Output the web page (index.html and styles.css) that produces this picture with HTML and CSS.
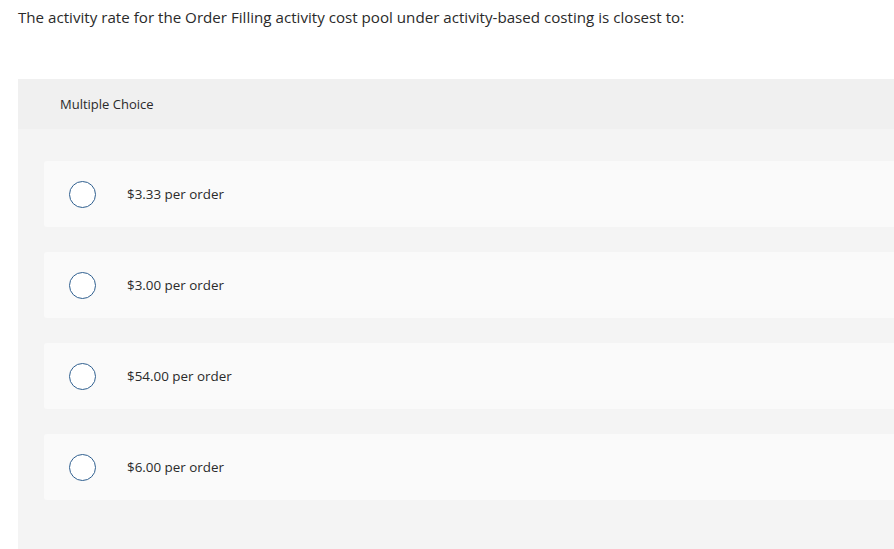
FILE: index.html
```html
<!DOCTYPE html>
<html>
<head>
<meta charset="utf-8">
<link rel="stylesheet" href="styles.css">
</head>
<body>
<div class="page">
  <p class="question">The activity rate for the Order Filling activity cost pool under activity-based costing is closest to:</p>
  <div class="panel">
    <div class="panel-head">Multiple Choice</div>
    <div class="panel-body">
      <label class="option"><span class="radio"></span><span class="label">$3.33 per order</span></label>
      <label class="option"><span class="radio"></span><span class="label">$3.00 per order</span></label>
      <label class="option"><span class="radio"></span><span class="label">$54.00 per order</span></label>
      <label class="option"><span class="radio"></span><span class="label">$6.00 per order</span></label>
    </div>
  </div>
</div>
</body>
</html>
```

FILE: styles.css
```css
html, body {
  margin: 0;
  padding: 0;
  background: #ffffff;
  overflow: hidden;
}
body {
  font-family: "Open Sans", "Liberation Sans", sans-serif;
  color: #2a2a2a;
}
.page {
  padding: 0 0 0 18px;
  width: 900px;
}
.question {
  margin: 0;
  padding-top: 6px;
  font-size: 15.15px;
  line-height: 22px;
  height: 73px;
}
.panel {
  width: 900px;
}
.panel-head {
  background: #f0f0f0;
  height: 50px;
  display: flex;
  align-items: center;
  padding-left: 42px;
  font-size: 13px;
}
.panel-body {
  background: #f4f4f4;
  padding: 32px 0 49px 26px;
  display: flex;
  flex-direction: column;
  gap: 25px;
}
.option {
  background: #fafafa;
  border-radius: 3px;
  height: 66px;
  display: flex;
  align-items: center;
  padding-left: 25px;
}
.radio {
  width: 25px;
  height: 25px;
  border: 1.5px solid #2f5f8f;
  border-radius: 50%;
  background: #fff;
  flex: none;
}
.label {
  margin-left: 31px;
  font-size: 13.4px;
}
```
